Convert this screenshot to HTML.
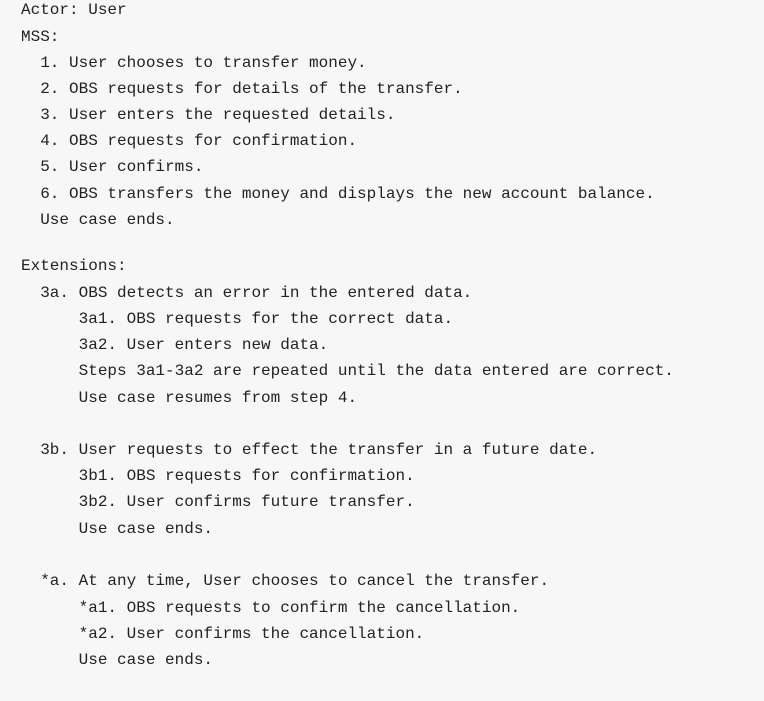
<!DOCTYPE html>
<html><head><style>
body{margin:0;width:764px;height:701px;background:#f7f7f7;overflow:hidden;position:relative;font-family:"Liberation Mono",monospace;font-size:16px;color:#222;}
div{position:absolute;white-space:pre;line-height:26px;left:21px;}
</style></head><body>
<div style="top:-3px">Actor: User</div>
<div style="top:24px">MSS:</div>
<div style="top:50px">  1. User chooses to transfer money.</div>
<div style="top:76px">  2. OBS requests for details of the transfer.</div>
<div style="top:102px">  3. User enters the requested details.</div>
<div style="top:128px">  4. OBS requests for confirmation.</div>
<div style="top:154px">  5. User confirms.</div>
<div style="top:181px">  6. OBS transfers the money and displays the new account balance.</div>
<div style="top:207px">  Use case ends.</div>
<div style="top:253px">Extensions:</div>
<div style="top:280px">  3a. OBS detects an error in the entered data.</div>
<div style="top:306px">      3a1. OBS requests for the correct data.</div>
<div style="top:332px">      3a2. User enters new data.</div>
<div style="top:358px">      Steps 3a1-3a2 are repeated until the data entered are correct.</div>
<div style="top:385px">      Use case resumes from step 4.</div>
<div style="top:437px">  3b. User requests to effect the transfer in a future date.</div>
<div style="top:463px">      3b1. OBS requests for confirmation.</div>
<div style="top:489px">      3b2. User confirms future transfer.</div>
<div style="top:516px">      Use case ends.</div>
<div style="top:568px">  *a. At any time, User chooses to cancel the transfer.</div>
<div style="top:595px">      *a1. OBS requests to confirm the cancellation.</div>
<div style="top:621px">      *a2. User confirms the cancellation.</div>
<div style="top:647px">      Use case ends.</div>
</body></html>
